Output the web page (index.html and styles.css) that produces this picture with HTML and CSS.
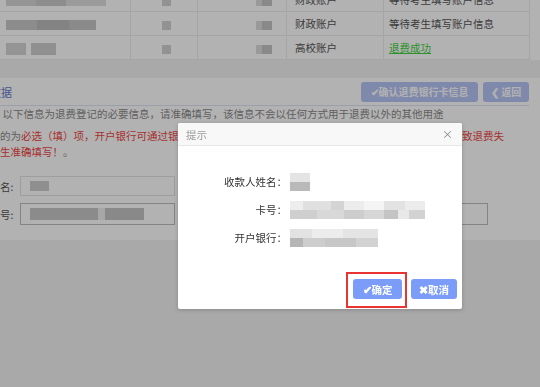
FILE: index.html
```html
<!DOCTYPE html>
<html lang="zh-CN">
<head>
  <meta charset="UTF-8" />
  <meta name="viewport" content="width=device-width, initial-scale=1" />
  <title>退费银行卡信息</title>
  <link rel="stylesheet" href="styles.css">
</head>
<body>
  <div class="page">
    <div class="panel list-panel">
      <table class="list">
        <tr>
          <td class="c1"><span class="mosaic m-row1"></span></td>
          <td class="c2"><span class="mosaic m-dot"></span></td>
          <td class="c3"><span class="mosaic m-dot2"></span></td>
          <td class="c4">财政账户</td>
          <td class="c5 warn">等待考生填写账户信息</td>
        </tr>
        <tr>
          <td class="c1"><span class="mosaic m-row2"></span></td>
          <td class="c2"><span class="mosaic m-dot"></span></td>
          <td class="c3"><span class="mosaic m-dot2"></span></td>
          <td class="c4">财政账户</td>
          <td class="c5 warn">等待考生填写账户信息</td>
        </tr>
        <tr>
          <td class="c1"><span class="mosaic m-row3"></span></td>
          <td class="c2"><span class="mosaic m-dot"></span></td>
          <td class="c3"><span class="mosaic m-dot2"></span></td>
          <td class="c4">高校账户</td>
          <td class="c5"><a class="ok">退费成功</a></td>
        </tr>
      </table>
    </div>

    <div class="panel form-panel">
      <div class="panel-head">
        <span class="title">数据</span>
        <div class="actions">
          <button type="button" class="btn btn-wide">✔确认退费银行卡信息</button>
          <button type="button" class="btn btn-back">❮ 返回</button>
        </div>
      </div>
      <p class="tip">，以下信息为退费登记的必要信息，请准确填写，该信息不会以任何方式用于退费以外的其他用途</p>
      <p class="tip tip-red"><span class="grey">的为</span>必选（填）项，开户银行可通过银行官网或拨打客服电话查询，若开户银行信息填写不准确将导致退费失<br>生准确填写！<span class="grey">。</span></p>
      <div class="field">
        <label>名:</label>
        <div class="input"><span class="mosaic m-in-name"></span></div>
      </div>
      <div class="field">
        <label>号:</label>
        <div class="input focus"><span class="mosaic m-in-card"></span></div>
        <div class="input side"></div>
      </div>
    </div>
  </div>

  <div class="mask"></div>

  <div class="dialog">
    <div class="dialog-head">
      <span>提示</span>
      <span class="close">×</span>
    </div>
    <div class="dialog-body">
      <span class="key">收款人姓名：</span>
      <span class="val"><span class="mosaic d-name"></span></span>
      <span class="key">卡号：</span>
      <span class="val"><span class="mosaic d-card"></span></span>
      <span class="key">开户银行：</span>
      <span class="val"><span class="mosaic d-bank"></span></span>
    </div>
    <div class="dialog-foot">
      <button type="button" class="dbtn dbtn-ok">✔确定</button>
      <button type="button" class="dbtn">✖取消</button>
    </div>
    <div class="mark"></div>
  </div>
</body>
</html>
```

FILE: styles.css
```css
* {
  box-sizing: border-box;
}

body {
  margin: 0;
  width: 540px;
  height: 387px;
  overflow: hidden;
  background: #f3f3f3;
  font-family: "Noto Sans CJK SC", "Noto Sans", sans-serif;
  font-size: 10.5px;
  color: #333;
}

.page {
  width: 540px;
}

.panel {
  background: #fff;
  margin-left: -12px;
  width: 552px;
}

.list-panel {
  height: 60px;
  overflow: hidden;
}

.list {
  margin-top: -13px;
  width: 541px;
  table-layout: fixed;
  border-collapse: collapse;
}

.list td {
  height: 24px;
  padding: 0 0 0 8px;
  border: 1px solid #ececec;
  white-space: nowrap;
  color: #555;
}

.list .c1 { width: 142px; padding-left: 17px; }
.list .c2 { width: 67px; padding-left: 31px; }
.list .c3 { width: 89px; padding-left: 58px; }
.list .c4 { width: 97px; }
.list .c5 { width: 146px; padding-left: 5px; }

.warn {
  color: #f24b4b;
}

.ok {
  color: #41d141;
  text-decoration: underline;
}

.mosaic {
  display: inline-block;
  vertical-align: middle;
  filter: blur(0.7px);
}

.m-row1 { width: 100px; height: 10px; background: linear-gradient(to right, #d6d6d6 30%, #cacaca 30% 60%, #dedede 60%); }
.m-row2 { width: 90px; height: 10px; background: linear-gradient(to right, #c9c9c9 35%, #bcbcbc 35% 70%, #c6c6c6 70%); }
.m-row3 { width: 50px; height: 12px; background: linear-gradient(to right, #d4d4d4 40%, #fff 40% 50%, #cfcfcf 50%); }
.m-dot { width: 9px; height: 9px; background: #d2d2d2; }
.m-dot2 { width: 16px; height: 9px; background: linear-gradient(to right, #dcdcdc 40%, #c4c4c4 40%); }

.form-panel {
  margin-top: 18px;
  height: 162px;
  padding-left: 12px;
  padding-right: 11px;
}

.panel-head {
  height: 28px;
  display: flex;
  align-items: center;
  justify-content: space-between;
  border-bottom: 1px solid #dfe3f5;
}

.title {
  margin-left: -10px;
  color: #6478c9;
  font-size: 11px;
}

.actions {
  display: flex;
  gap: 5px;
  flex-shrink: 0;
}

.btn {
  height: 20px;
  padding: 0;
  border: none;
  border-radius: 3px;
  background: #b6c4f6;
  color: #fff;
  font-family: inherit;
  font-size: 10px;
  font-weight: bold;
  white-space: nowrap;
}

.btn-wide {
  width: 117px;
}

.btn-back {
  width: 46px;
}

.tip {
  margin: 0;
  line-height: 16px;
  white-space: nowrap;
  color: #8a8a8a;
}

.tip:first-of-type {
  margin-left: -8px;
}

.tip-red {
  margin-top: 6px;
  color: #f04545;
}

.grey {
  color: #8a8a8a;
}

.field {
  display: flex;
  align-items: center;
  margin-top: 16px;
}

.field + .field {
  margin-top: 7px;
}

.field label {
  width: 20px;
  color: #555;
}

.input {
  width: 155px;
  height: 20px;
  border: 1px solid #e2e2e2;
  padding-left: 9px;
  display: flex;
  align-items: center;
}

.input.focus {
  height: 22px;
  border-color: #bdbdbd;
}

.input.side {
  margin-left: 205px;
  width: 108px;
  height: 22px;
  border-color: #bdbdbd;
}

.m-in-name { width: 19px; height: 10px; background: #cdcdcd; }
.m-in-card { width: 114px; height: 12px; background: linear-gradient(to right, #c8c8c8 60%, #efefef 60% 66%, #c4c4c4 66%); }

.mask {
  position: fixed;
  inset: 0;
  background: rgba(0, 0, 0, 0.3);
}

.dialog {
  position: absolute;
  left: 178px;
  top: 123px;
  width: 284px;
  height: 186px;
  background: #fff;
  border-radius: 2px;
  box-shadow: 0 1px 4px rgba(0, 0, 0, 0.2);
}

.dialog-head {
  height: 23px;
  display: flex;
  align-items: center;
  justify-content: space-between;
  padding: 0 9px 0 8px;
  background: #f8f8f8;
  border-bottom: 1px solid #e8e8e8;
  border-radius: 2px 2px 0 0;
  color: #9a9a9a;
  font-size: 10.5px;
}

.close {
  font-size: 11px;
  color: #888;
}

.dialog-body {
  display: grid;
  grid-template-columns: 109px 1fr;
  row-gap: 10px;
  align-items: center;
  padding-top: 27px;
  font-size: 10.5px;
}

.key {
  text-align: right;
  line-height: 18px;
}

.val {
  display: flex;
  align-items: center;
  padding-left: 3px;
  height: 18px;
}

.d-name { width: 20px; height: 18px; background: linear-gradient(#e4e4e4 50%, #b9b9b9 50%); }
.d-card {
  width: 135px;
  height: 18px;
  background:
    linear-gradient(to right, #ededed 10%, #e0e0e0 10% 30%, #d4d4d4 30% 40%, #ececec 40% 55%, #f4f4f4 55% 70%, #e2e2e2 70% 85%, #ececec 85%) top / 100% 50% no-repeat,
    linear-gradient(to right, #cfcfcf 20%, #d8d8d8 20% 40%, #cdcdcd 40% 55%, #d6d6d6 55% 70%, #c4c4c4 70% 80%, #e8e8e8 80% 88%, #d2d2d2 88%) bottom / 100% 50% no-repeat;
}
.d-bank {
  width: 88px;
  height: 18px;
  background:
    linear-gradient(to right, #e2e2e2 25%, #ececec 25% 60%, #e4e4e4 60%) top / 100% 50% no-repeat,
    linear-gradient(to right, #b5b5b5 15%, #cdcdcd 15% 40%, #c7c7c7 40% 75%, #d2d2d2 75%) bottom / 100% 50% no-repeat;
}

.dialog-foot {
  display: flex;
  justify-content: flex-end;
  gap: 9px;
  padding: 32px 5px 0 0;
}

.dbtn {
  width: 46px;
  height: 20px;
  border: none;
  border-radius: 3px;
  background: #7b9cf8;
  color: #fff;
  font-family: inherit;
  font-size: 10.5px;
  font-weight: bold;
  padding: 0;
}

.dbtn-ok {
  width: 49px;
}

.mark {
  position: absolute;
  left: 168px;
  top: 149px;
  width: 61px;
  height: 36px;
  border: 2px solid #ea3434;
}
```
